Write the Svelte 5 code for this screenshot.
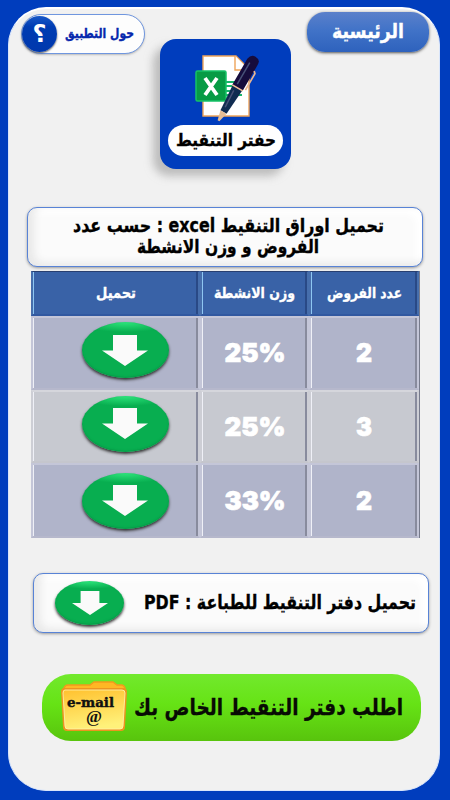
<script>
  const rows = [
    { weight: '25%', count: '2' },
    { weight: '25%', count: '3' },
    { weight: '33%', count: '2' }
  ];
</script>

{#snippet label(text, width, size, height, baseline)}
  <svg class="label" {width} {height} direction="rtl">
    <text x={width / 2} y={baseline} text-anchor="middle" font-size={size} textLength={width} lengthAdjust="spacingAndGlyphs">{text}</text>
  </svg>
{/snippet}

{#snippet arrow()}
  <svg class="arrow" viewBox="0 0 46 31" preserveAspectRatio="none"><path d="M11 0H35V15.5H46L23 31L0 15.5H11Z" fill="#fafafa" /></svg>
{/snippet}

<main>
  <section class="panel">
    <header>
      <button class="about">
        <span class="help">؟</span>
        {@render label('حول التطبيق', 69, 13.5, 24, 16)}
      </button>
      <div class="logo">
        <svg class="excel" width="66" height="68" viewBox="0 0 66 68">
          <path d="M8 2H41L54 15V62H8Z" fill="#fff" stroke="#eea45a" stroke-width="1.4" />
          <path d="M40 2V16H54" fill="#fff" stroke="#eea45a" stroke-width="1.4" />
          <path d="M31 28H41M31 32H39M31 37H37M31 41H47" stroke="#18b66b" stroke-width="2" />
          <rect x="1" y="17" width="30" height="30" rx="1.5" fill="#079b45" stroke="#16c267" stroke-width="1.5" />
          <path d="M10 24L22 41M22 24L10 41" stroke="#fff" stroke-width="3.8" />
          <g transform="translate(58 7) rotate(30)">
            <path d="M-6 1Q-5-5 0-5Q6-5 6 1V31H-6Z" fill="#160c3c" />
            <path d="M-5.5 31H5.5L3.5 59H-3.5Z" fill="#102c51" />
            <path d="M-3.5 59H3.5L1 69H-1Z" fill="#e6bd95" />
            <path d="M-6 31H6" stroke="#f2bd96" stroke-width="1.6" />
            <path d="M6 8L8 10V29" fill="none" stroke="#eab58f" stroke-width="1.7" />
            <path d="M-2 3V28M-2 35L-1 54" stroke="#475177" stroke-width="1.5" />
          </g>
        </svg>
        <div class="logo-name">{@render label('حفتر التنقيط', 100, 17, 28, 19)}</div>
      </div>
      <button class="home">{@render label('الرئيسية', 72, 20, 34, 23)}</button>
    </header>

    <div class="card title">
      {@render label('تحميل اوراق التنقيط excel : حسب عدد', 311, 19, 20, 15)}
      {@render label('الفروض و وزن الانشطة', 182, 19, 24, 15.5)}
    </div>

    <div class="table">
      <div class="row head">
        <div class="cell">{@render label('تحميل', 40, 15, 24, 18)}</div>
        <div class="cell">{@render label('وزن الانشطة', 81, 15, 24, 18)}</div>
        <div class="cell">{@render label('عدد الفروض', 75, 15, 24, 18)}</div>
      </div>
      {#each rows as row, i}
        <div class="row" class:gray={i === 1}>
          <div class="cell"><button class="download">{@render arrow()}</button></div>
          <div class="cell number"><svg width="70" height="38"><text x="4.5" y="29" font-size="26" textLength="61" lengthAdjust="spacingAndGlyphs">{row.weight}</text></svg></div>
          <div class="cell number"><svg width="26" height="38"><text x="5" y="29" font-size="26" textLength="16" lengthAdjust="spacingAndGlyphs">{row.count}</text></svg></div>
        </div>
      {/each}
    </div>

    <div class="card pdf">
      <button class="download small">{@render arrow()}</button>
      {@render label('تحميل دفتر التنقيط للطباعة : PDF', 272, 19.5, 36, 24)}
    </div>

    <button class="order">
      <svg width="68" height="52" viewBox="0 0 68 52">
        <defs><linearGradient id="folder" x2="0.25" y2="1"><stop stop-color="#ffc02d" /><stop offset="1" stop-color="#fff17a" /></linearGradient></defs>
        <path d="M4 12V7Q5 4 8 4H30L34 1H53L57 4H62Q66 5 65 12Z" fill="#ffb724" stroke="#f39a1c" stroke-width="1.5" />
        <path d="M4 8H63Q66 8 66 11L64 46Q64 49 61 49H7Q4 49 4 46L2 11Q2 8 4 8Z" fill="url(#folder)" stroke="#ed941f" stroke-width="2" />
        <path d="M5 9H62Q65 9 65 12L63 45Q63 48 60 48H8Q5 48 5 45L3 12Q3 9 5 9Z" fill="none" stroke="#fff0a6" stroke-width="0.9" />
        <text class="mail" x="7" y="26" font-size="12.5" textLength="47" lengthAdjust="spacingAndGlyphs">e-mail</text>
        <text class="at" x="26" y="41" font-size="16" textLength="16" lengthAdjust="spacingAndGlyphs">@</text>
      </svg>
      {@render label('اطلب دفتر التنقيط الخاص بك', 269, 23, 44, 30)}
    </button>
  </section>
</main>

<style>
  :global(body) { margin: 0; background: #003dbd; }
  main { box-sizing: border-box; width: 450px; height: 800px; padding: 7px 9px 9px 8px; background: #003dbd; font-family: "DejaVu Sans", sans-serif; }
  .panel { box-sizing: border-box; width: 432px; height: 784px; border: 1px solid #d8e5fb; border-top: 2px solid #fff; border-radius: 38px; background: #f1f1f1; display: flex; flex-direction: column; }
  button { padding: 0; border: 0; font: inherit; box-sizing: border-box; }
  svg { display: block; flex: none; }
  .label { overflow: visible; font-family: "DejaVu Sans", sans-serif; font-weight: bold; fill: currentColor; stroke: currentColor; stroke-width: 0.35px; }
  header { display: flex; align-items: flex-start; height: 199px; padding-left: 12px; }
  .about { display: flex; align-items: center; gap: 8px; width: 124px; height: 40px; margin-top: 5px; border: 1px solid #6f96df; border-radius: 20px; background: #fdfdfd; color: #0728ad; box-shadow: 0 1px 2px #9999; }
  .help { display: flex; align-items: center; justify-content: center; width: 35px; height: 36px; border-radius: 50%; background: linear-gradient(#1858c8, #003cb2 30%, #0038ad); box-shadow: 0 1px 2px #555; color: #fff; font: bold 24px "DejaVu Serif", "DejaVu Sans", serif; line-height: 32px; }
  .logo { width: 131px; height: 130px; margin: 30px 0 0 15px; border-radius: 16px; background: #003dbd; box-shadow: -7px 7px 9px #9999; display: flex; flex-direction: column; align-items: center; box-sizing: border-box; padding-top: 15px; }
  .excel { overflow: visible; margin-left: 4px; }
  .logo-name { width: 115px; height: 31px; margin-top: 3px; border-radius: 16px; background: #fff; color: #000; display: flex; justify-content: center; align-items: center; }
  .home { width: 122px; height: 40px; margin: 3px 0 0 16px; border-radius: 18px; background: linear-gradient(#5b80ca, #4173c8 45%, #2e62bd); color: #fff; display: flex; align-items: center; justify-content: center; box-shadow: 0 1px 3px #555; }
  .card { box-sizing: border-box; border: 1px solid #5883d6; border-radius: 10px; background: #fbfbfb; box-shadow: 0 1px 3px #999, inset 6px -3px 8px #e8e8e8, inset -6px 6px 7px #fff; color: #000; }
  .title { width: 396px; height: 60px; margin: -1px 0 0 18px; padding: 9px 0 0 6px; display: flex; flex-direction: column; align-items: center; }
  .table { width: 389px; margin: 4px 0 0 22px; border-right: 1px solid #777b8c; box-sizing: border-box; }
  .row { display: grid; grid-template-columns: 169px 109px 110px; height: 74px; background: #b0b4ca; }
  .row.head { height: 45px; background: #3962a7; color: #fff; }
  .row.gray { height: 73px; background: #c7c9d0; }
  .row.gray + .row { height: 75px; }
  .cell { display: flex; align-items: center; justify-content: center; border: 2px solid #c4c6d8; border-bottom-color: #b6b8cc; padding-bottom: 2px; box-shadow: inset 1px 0 #eff0f7, inset -2px 0 #888b9d; min-width: 0; }
  .head .cell { border-color: #466eac; border-top: 1px solid #283f70; border-bottom: 2px solid #3158a0; box-shadow: inset 1px 0 #8ec6f2, inset -2px 0 #294986; }
  .gray .cell { border-color: #d5d6dc #cdced5 #c5c6cd; }
  .number { fill: #fff; stroke: #fff; stroke-width: 0.7px; font-family: Inter, sans-serif; font-weight: 900; }
  .download { width: 87px; height: 56px; margin: 0 0 4px 19px; display: flex; justify-content: center; align-items: center; border-radius: 50%; background: radial-gradient(ellipse 55% 18% at 50% 0, #2de67c, #08ae50); box-shadow: 0 2px 3px #333, inset 0 -1px 2px #079746; }
  .gray + .row .download { margin-top: 2px; margin-bottom: 0; }
  .arrow { width: 46px; height: 31px; }
  .pdf { display: flex; align-items: center; width: 396px; height: 60px; margin: 35px 0 0 24px; }
  .download.small { width: 69px; height: 44px; margin: 0 20px 0 21px; }
  .small .arrow { width: 36px; height: 24px; }
  .order { width: 379px; height: 67px; margin: 41px 0 0 33px; border-radius: 29px; background: linear-gradient(#72e92d, #66e315 45%, #58c40d); color: #080b04; display: flex; align-items: center; gap: 6px; padding: 0 0 1px 18px; }
  .mail { font-family: "DejaVu Serif", serif; font-weight: bold; fill: #111; stroke: #111; stroke-width: 0.4px; }
  .at { font-family: "Liberation Serif", serif; font-weight: bold; fill: #111; }
</style>
